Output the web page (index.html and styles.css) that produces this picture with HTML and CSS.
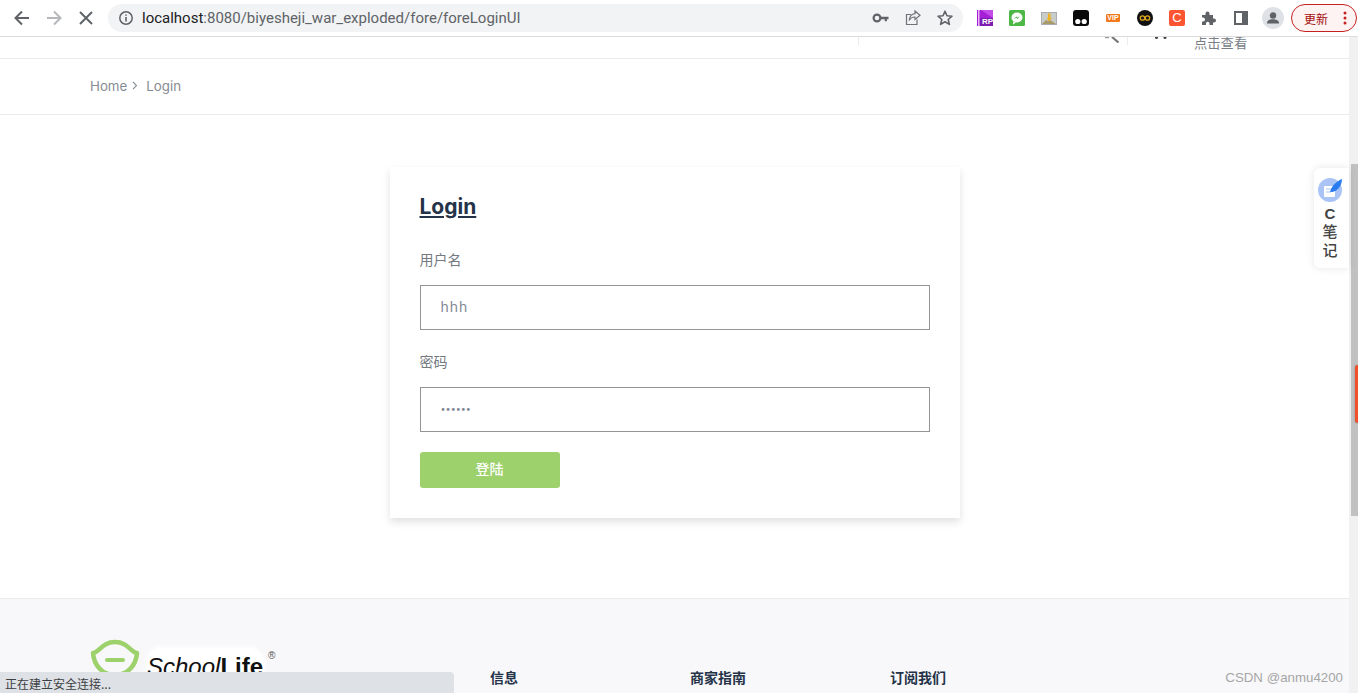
FILE: index.html
```html
<!DOCTYPE html>
<html lang="zh">
<head>
    <meta charset="UTF-8">
    <meta name="viewport" content="width=device-width, initial-scale=1.0">
    <title>Login</title>
    <link rel="stylesheet" href="styles.css">
</head>
<body>

<!-- barra del navegador -->
<div class="toolbar">
    <div class="nav-btn">
        <svg width="20" height="20" viewBox="0 0 20 20"><path d="M17 10H4M10 3.5L3.5 10l6.500 6.500" fill="none" stroke="#5f6368" stroke-width="2"/></svg>
    </div>
    <div class="nav-btn">
        <svg width="20" height="20" viewBox="0 0 20 20"><path d="M3 10h13M10 3.5l6.500 6.500-6.500 6.500" fill="none" stroke="#b5b7ba" stroke-width="2"/></svg>
    </div>
    <div class="nav-btn">
        <svg width="20" height="20" viewBox="0 0 20 20"><path d="M4 4l12 12M16 4L4 16" fill="none" stroke="#5f6368" stroke-width="2"/></svg>
    </div>
    <div class="address">
        <svg class="info" width="16" height="16" viewBox="0 0 16 16"><circle cx="8" cy="8" r="6.200" fill="none" stroke="#5f6368" stroke-width="1.500"/><path d="M8 7v4.500M8 4.400v1.400" stroke="#5f6368" stroke-width="1.600"/></svg>
        <span class="url"><span class="host">localhost</span>:8080/biyesheji_war_exploded/fore/foreLoginUI</span>
        <div class="slot">
            <svg width="18" height="18" viewBox="0 0 18 18"><circle cx="5" cy="9" r="3.400" fill="none" stroke="#5f6368" stroke-width="2.200"/><path d="M8 7.800h8.500v2.400h-1.600v2h-2.200v-2H8z" fill="#5f6368"/></svg>
        </div>
        <div class="slot">
            <svg width="18" height="18" viewBox="0 0 18 18"><path d="M13 10.500V15.500H2.500V5.500H7" fill="none" stroke="#6f7377" stroke-width="1.200"/><path d="M11 2l5 4.200-5 4.300V8C8.500 8 6.500 9 5.200 11.500 5.500 8 7.500 5 11 4.600z" fill="none" stroke="#6f7377" stroke-width="1.200"/></svg>
        </div>
        <div class="slot">
            <svg width="18" height="18" viewBox="0 0 18 18"><path d="M9 2.200l2 4.600 5 .4-3.800 3.300 1.200 4.900L9 12.800l-4.400 2.600 1.200-4.900L2 7.200l5-.4z" fill="none" stroke="#5f6368" stroke-width="1.600" stroke-linejoin="round"/></svg>
        </div>
    </div>
    <div class="extensions">
        <div class="slot">
            <svg width="16" height="16" viewBox="0 0 16 16"><rect width="16" height="16" fill="#a41fd6"/><rect x="1" width="1.500" height="16" fill="#e9b8f5"/><path d="M4 0h12v8z" fill="#c34ce8"/><rect x="3" y="8" width="13" height="8" fill="#7c1fb0"/></svg>
            <span class="rp">RP</span>
        </div>
        <div class="slot">
            <svg width="16" height="16" viewBox="0 0 16 16"><rect width="16" height="16" rx="1.500" fill="#4db848"/><ellipse cx="8" cy="7.500" rx="5.500" ry="5" fill="#fff"/><path d="M4.500 11l-.5 3.500 3-2z" fill="#fff"/><path d="M4.800 9l2.500-2.500 1.500 1.300L11 6 8.800 9 7.200 7.700z" fill="#4db848"/></svg>
        </div>
        <div class="slot">
            <svg width="16" height="13" viewBox="0 0 16 13"><rect width="16" height="13" fill="#a9adb3"/><rect x="1" y="1" width="14" height="11" fill="#c7ccc9"/><path d="M1 12l4-4 2 1 2-1 6 4z" fill="#a89a6a"/><path d="M7 1.500h2.500V6H11L8.200 9.500 5.500 6H7z" fill="#eeb325"/></svg>
        </div>
        <div class="slot">
            <svg width="16" height="16" viewBox="0 0 16 16"><rect width="16" height="16" rx="3" fill="#0a0a0a"/><circle cx="4.800" cy="11.500" r="2.600" fill="#fff"/><circle cx="11.200" cy="11.500" r="2.600" fill="#fff"/></svg>
        </div>
        <div class="slot">
            <span class="vip">VIP</span>
        </div>
        <div class="slot">
            <svg width="16" height="16" viewBox="0 0 16 16"><circle cx="8" cy="8" r="8" fill="#111"/><circle cx="5.500" cy="8" r="2.200" fill="none" stroke="#d9a520" stroke-width="1.300"/><circle cx="10.500" cy="8" r="2.200" fill="none" stroke="#d9a520" stroke-width="1.300"/></svg>
        </div>
        <div class="slot">
            <span class="csdn">C</span>
        </div>
        <div class="slot">
            <svg width="16" height="16" viewBox="0 0 16 16"><path d="M1 5h3.500V3.500a2 2 0 0 1 4 0V5H12v3.500h1a2 2 0 0 1 0 4h-1V15H8.500v-1.500a1.800 1.800 0 0 0-3.600 0V15H1v-3.500h1a2 2 0 0 0 0-4H1z" fill="#5f6368"/></svg>
        </div>
        <div class="slot">
            <svg width="14" height="14" viewBox="0 0 14 14"><rect x="1" y="1" width="12" height="12" fill="none" stroke="#5f6368" stroke-width="2"/><rect x="8" y="1" width="5" height="12" fill="#5f6368"/></svg>
        </div>
        <div class="slot">
            <svg width="22" height="22" viewBox="0 0 22 22"><circle cx="11" cy="11" r="11" fill="#dee1e6"/><circle cx="11" cy="8.500" r="3.200" fill="#5f6368"/><path d="M5 16c0-2.500 3-3.700 6-3.700s6 1.200 6 3.700v.5H5z" fill="#5f6368"/></svg>
        </div>
    </div>
    <div class="update">
        <span>更新</span>
        <svg width="4" height="14" viewBox="0 0 4 14"><circle cx="2" cy="2" r="1.500" fill="#c5221f"/><circle cx="2" cy="7" r="1.500" fill="#c5221f"/><circle cx="2" cy="12" r="1.500" fill="#c5221f"/></svg>
    </div>
</div>

<div class="viewport">
    <div class="page">
        <div class="topbar">
            <div class="top-search">
                <svg width="16" height="6" viewBox="0 6 16 6"><path d="M1 6.500h4" fill="none" stroke="#999" stroke-width="1.500"/><path d="M8 6l6.500 5.500" fill="none" stroke="#777" stroke-width="2.200"/></svg>
            </div>
            <div class="top-cart">
                <svg width="14" height="3" viewBox="0 0 14 3"><circle cx="2.500" cy="0.500" r="1.500" fill="#444"/><circle cx="11" cy="0.500" r="1.500" fill="#444"/></svg>
                <span>点击查看</span>
            </div>
        </div>

        <div class="breadcrumb">
            <a href="#">Home</a>
            <svg width="6" height="9" viewBox="0 0 6 9"><path d="M1 .8l3.500 3.700L1 8.200" fill="none" stroke="#878c93" stroke-width="1.100"/></svg>
            <span>Login</span>
        </div>

        <div class="main">
            <form class="login-card">
                <h2>Login</h2>
                <label class="field-label">用户名</label>
                <input class="field" type="text" value="hhh">
                <label class="field-label second">密码</label>
                <input class="field password" type="password" value="123456">
                <button type="button">登陆</button>
            </form>
        </div>

        <div class="footer">
            <div class="footer-logo">
                <svg width="50" height="38" viewBox="0 0 50 38"><path d="M3 14C10 13 12 3 25 3s15 10 22 11c-1 12-9 22-22 22S4 26 3 14z" fill="none" stroke="#9dd16b" stroke-width="4.500" stroke-linejoin="round"/><path d="M17 21h16" stroke="#9dd16b" stroke-width="4" stroke-linecap="round"/></svg>
                <div class="brand"><i>School</i><b>Life</b></div>
                <span class="reg">®</span>
            </div>
            <div class="footer-col"><h4>信息</h4></div>
            <div class="footer-col"><h4>商家指南</h4></div>
            <div class="footer-col"><h4>订阅我们</h4></div>
        </div>
    </div>
    <div class="scrollbar">
        <div class="thumb"></div>
    </div>

    <div class="note-tab">
        <svg width="26" height="26" viewBox="0 0 26 26"><circle cx="13" cy="13" r="12" fill="#a9c4f5"/><rect x="7" y="9" width="11" height="11" rx="1" fill="#fff"/><path d="M9 12h6M9 15h5" stroke="#a9c4f5" stroke-width="1"/><path d="M13 15C15 8 20 4 25 2c0 6-4 12-10 13z" fill="#2a7bf0"/></svg>
        <b>C</b>
        <span>笔</span>
        <span>记</span>
    </div>
    <div class="side-tag"></div>
    <div class="status">正在建立安全连接...</div>
    <div class="watermark">CSDN @anmu4200</div>
</div>

</body>
</html>
```

FILE: styles.css
```css
html, body {
    height: 100%;
}
body {
    margin: 0;
    height: 693px;
    overflow: hidden;
    background-color: #fff;
    font-family: "Inter", "Noto Sans CJK SC", sans-serif;
    display: flex;
    flex-direction: column;
}

/* Barra del navegador */
.toolbar {
    height: 36px;
    flex: none;
    display: flex;
    align-items: center;
    padding-left: 6px;
    border-bottom: 1px solid #dcdcdc;
    background-color: #fff;
}
.nav-btn {
    width: 32px;
    height: 32px;
    display: flex;
    align-items: center;
    justify-content: center;
}
.address {
    width: 855px;
    height: 28px;
    margin-left: 6px;
    padding-left: 10px;
    padding-right: 2px;
    box-sizing: border-box;
    display: flex;
    align-items: center;
    border-radius: 14px;
    background-color: #f1f3f4;
}
.info {
    flex: none;
}
.url {
    flex: 1;
    margin-left: 8px;
    font-family: "Roboto", sans-serif;
    font-size: 15px;
    color: #5f6368;
    white-space: nowrap;
}
.host {
    color: #202124;
}
.slot {
    position: relative;
    width: 32px;
    height: 28px;
    flex: none;
    display: flex;
    align-items: center;
    justify-content: center;
}
.extensions {
    display: flex;
    align-items: center;
    margin-left: 6px;
}
.rp {
    position: absolute;
    right: 8px;
    bottom: 6px;
    font-family: "Liberation Sans", sans-serif;
    font-size: 8px;
    line-height: 8px;
    font-weight: bold;
    color: #fff;
}
.vip {
    width: 14px;
    height: 8px;
    border-radius: 1px;
    background-color: #f47a1f;
    font-family: "Liberation Sans", sans-serif;
    font-size: 7px;
    line-height: 8px;
    font-weight: bold;
    text-align: center;
    color: #fff;
}
.csdn {
    width: 16px;
    height: 16px;
    border-radius: 2px;
    background-color: #fc5531;
    font-family: "Liberation Sans", sans-serif;
    font-size: 13px;
    line-height: 16px;
    text-align: center;
    color: #fff;
}
.update {
    width: 66px;
    height: 28px;
    margin-left: 2px;
    box-sizing: border-box;
    display: flex;
    align-items: center;
    justify-content: space-between;
    padding: 0 9px 0 12px;
    border: 1px solid #c5221f;
    border-radius: 14px;
    background-color: #fdf3f2;
    color: #a50e0e;
    font-family: "Noto Sans CJK SC", sans-serif;
    font-size: 12px;
}

/* Pagina */
.viewport {
    position: relative;
    flex: 1;
    min-height: 0;
    display: flex;
}
.page {
    flex: 1;
    min-width: 0;
    overflow: hidden;
}
.scrollbar {
    width: 9px;
    flex: none;
    padding-top: 127px;
    background-color: #f1f1f1;
    display: flex;
    justify-content: flex-end;
}
.thumb {
    width: 7px;
    height: 352px;
    background-color: #c1c1c1;
}
.topbar {
    height: 21px;
    display: flex;
    justify-content: flex-end;
    border-bottom: 1px solid #ebebeb;
    overflow: hidden;
}
.top-search {
    width: 269px;
    height: 8px;
    box-sizing: border-box;
    display: flex;
    justify-content: flex-end;
    padding-right: 7px;
    border-left: 1px solid #ebebeb;
}
.top-cart {
    width: 222px;
    height: 8px;
    box-sizing: border-box;
    display: flex;
    align-items: flex-start;
    padding-left: 26px;
    border-left: 1px solid #ebebeb;
    font-family: "Noto Sans CJK SC", sans-serif;
    font-size: 13.300px;
    color: #7a7f87;
}
.top-cart span {
    margin-left: 26px;
    line-height: 12px;
    white-space: nowrap;
}
.breadcrumb {
    height: 53px;
    padding-bottom: 2px;
    display: flex;
    align-items: center;
    gap: 5px;
    padding-left: 90px;
    border-bottom: 1px solid #ebebeb;
    font-size: 13.300px;
    color: #878c93;
}
.breadcrumb a {
    color: #878c93;
    text-decoration: none;
}
.breadcrumb span {
    margin-left: 3px;
}
.main {
    height: 483px;
    box-sizing: border-box;
    padding-top: 52px;
    display: flex;
    justify-content: center;
}
.login-card {
    width: 570px;
    height: 351px;
    box-sizing: border-box;
    padding: 25px 30px 0;
    background-color: #fff;
    box-shadow: 0 4px 8px rgba(0, 0, 0, 0.12);
}
.login-card h2 {
    margin: 0 0 27px;
    font-size: 21px;
    line-height: 30px;
    font-weight: bold;
    color: #253349;
    text-decoration: underline;
}
.field-label {
    display: block;
    height: 20px;
    margin-bottom: 16px;
    font-family: "Noto Sans CJK SC", sans-serif;
    font-size: 14px;
    line-height: 20px;
    color: #74797f;
}
.second {
    margin-top: 21px;
}
.field {
    display: block;
    width: 510px;
    height: 45px;
    box-sizing: border-box;
    padding: 0 20px 2px;
    border: 1px solid #949494;
    border-radius: 0;
    outline: none;
    font-family: "Inter", sans-serif;
    font-size: 14px;
    letter-spacing: 1px;
    color: #7f8794;
}
.password {
    font-size: 9px;
    letter-spacing: 0;
}
button {
    display: block;
    width: 140px;
    height: 36px;
    margin-top: 20px;
    padding: 0 0 5px;
    border: none;
    border-radius: 3px;
    background-color: #9dd16b;
    color: #fff;
    font-family: "Noto Sans CJK SC", sans-serif;
    font-size: 14px;
    font-weight: 500;
}
.footer {
    height: 100px;
    display: flex;
    padding-top: 40px;
    padding-left: 90px;
    border-top: 1px solid #ebebeb;
    background-color: #f8f8fa;
}
.footer-logo {
    width: 400px;
    flex: none;
    display: flex;
    align-items: flex-start;
}
.footer-logo svg {
    flex: none;
}
.brand {
    margin-left: 7px;
    margin-top: 9px;
    padding-top: 5px;
    height: 40px;
    background-color: #fff;
    border-radius: 14px;
    box-shadow: 0 0 5px 2px rgba(255, 255, 255, 0.8);
    font-family: "Liberation Sans", sans-serif;
    font-size: 24px;
    color: #111;
    white-space: nowrap;
}
.reg {
    margin-left: 5px;
    margin-top: 11px;
    font-family: "Liberation Sans", sans-serif;
    font-size: 10px;
    line-height: 12px;
    color: #555;
}
.footer-col {
    width: 200px;
    flex: none;
}
.footer-col h4 {
    margin: 29px 0 0;
    font-family: "Noto Sans CJK SC", sans-serif;
    font-size: 14px;
    line-height: 18px;
    font-weight: bold;
    color: #253349;
}

/* Elementos sobre la pagina */
.note-tab {
    position: absolute;
    top: 131px;
    right: 9px;
    width: 35px;
    height: 100px;
    box-sizing: border-box;
    padding-top: 9px;
    padding-right: 3px;
    display: flex;
    flex-direction: column;
    align-items: center;
    border-radius: 6px 0 0 6px;
    background-color: #fff;
    box-shadow: 0 0 8px rgba(0, 0, 0, 0.10);
    font-family: "Noto Sans CJK SC", sans-serif;
    font-size: 15px;
    line-height: 19px;
    font-weight: 500;
    color: #444;
}
.note-tab b {
    font-family: "Liberation Sans", sans-serif;
    line-height: 15px;
    margin-top: 3px;
}
.side-tag {
    position: absolute;
    top: 328px;
    right: 0;
    width: 3px;
    height: 58px;
    border-radius: 3px 0 0 3px;
    background-color: #f0502a;
    box-shadow: 0 0 2px #777;
}
.status {
    position: absolute;
    left: 0;
    bottom: 0;
    width: 454px;
    height: 21px;
    box-sizing: border-box;
    padding-left: 5px;
    border-top-right-radius: 4px;
    background-color: #dee1e6;
    font-family: "Noto Sans CJK SC", sans-serif;
    font-size: 12px;
    line-height: 23px;
    color: #3c4043;
}
.watermark {
    position: absolute;
    right: 15px;
    bottom: 6px;
    font-family: "Liberation Sans", sans-serif;
    font-size: 13.300px;
    line-height: 18px;
    color: #a6a6a6;
}
```
